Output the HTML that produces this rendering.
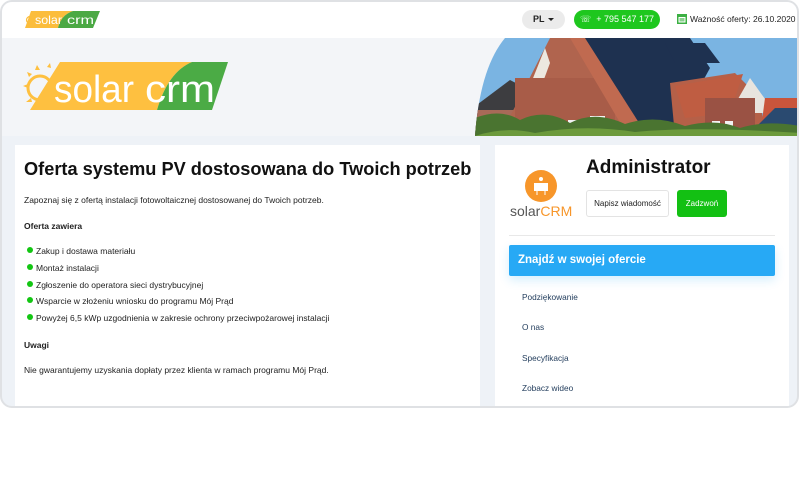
<!DOCTYPE html>
<html><head><meta charset="utf-8"><style>
*{margin:0;padding:0;box-sizing:border-box}
body{width:800px;height:500px;background:#fff;font-family:"Liberation Sans",sans-serif;position:relative;overflow:hidden}
.frame{position:absolute;left:0;top:0;width:799px;height:408px;border:2px solid #dfe1e4;border-radius:12px;overflow:hidden;background:#eef2f7}
.in{position:absolute;left:-2px;top:-2px;width:800px;height:410px}
.hdr{position:absolute;left:0;top:0;width:100%;height:38px;background:#fff}
.hero{position:absolute;left:0;top:38px;width:100%;height:98px;background:#f3f5f8}
.pl{position:absolute;left:522px;top:10px;width:43px;height:19px;background:#ebebeb;border-radius:10px;font-size:9px;font-weight:bold;color:#222;line-height:19px;padding-left:11px}
.pl:after{content:"";position:absolute;left:26px;top:8px;border:3px solid transparent;border-top:3px solid #222}
.tel{position:absolute;left:574px;top:10px;width:86px;height:19px;background:#1ec71e;border-radius:10px;color:#fff;font-size:9px;line-height:19px;text-align:center;white-space:nowrap}
.wz{position:absolute;top:14px;font-size:8.5px;color:#222;white-space:nowrap}
.card{position:absolute;background:#fff}
h1{font-size:18.2px;font-weight:bold;color:#111;position:absolute;left:9px;top:14px;white-space:nowrap}
.t{position:absolute;left:9px;font-size:8.5px;color:#222;white-space:nowrap}
.b{font-weight:bold}
.li:before{content:"";position:absolute;left:-9px;top:1px;width:6px;height:6px;border-radius:50%;background:#13c613}
.nav{position:absolute;left:27px;font-size:8.3px;color:#1f3a5a}
</style></head><body>
<div class="frame"><div class="in">
<div class="hdr">
<svg style="position:absolute;left:23px;top:9px" width="78" height="21" viewBox="0 0 78 21">
<path d="M8 2 H50 Q38 6 35 19 H2 Z" fill="#fbbd3c"/><path d="M50 2 H77 L70 19 H35 Q38 6 50 2Z" fill="#4ba944"/>
<text x="12" y="15" font-size="12" fill="#fff" font-family="Liberation Sans" textLength="27" lengthAdjust="spacingAndGlyphs">solar</text><text x="44" y="15" font-size="12" fill="#fff" font-family="Liberation Sans" textLength="27" lengthAdjust="spacingAndGlyphs">crm</text>
<circle cx="7" cy="11" r="3.5" fill="none" stroke="#fbbd3c" stroke-width="1.2"/></svg>
<div class="pl">PL</div>
<div class="tel">☏ &nbsp;+ 795 547 177</div>
<svg style="position:absolute;left:677px;top:13px" width="10" height="11"><rect x="0" y="1" width="10" height="10" fill="#3cb043"/><rect x="1.5" y="4" width="7" height="5.5" fill="#fff"/><rect x="2.5" y="5" width="5" height="3.5" fill="#3cb043" opacity=".6"/></svg>
<div class="wz" style="left:690px">Ważność oferty: 26.10.2020</div>
</div>
<div class="hero">
<svg style="position:absolute;left:20px;top:20px" width="210" height="56" viewBox="0 0 210 56">
<path d="M40 4 H172 Q148 14 137 52 H10 Z" fill="#fec040"/><path d="M172 4 H208 L192 52 H137 Q148 14 172 4Z" fill="#4bab45"/>
<circle cx="20" cy="30" r="12" fill="none" stroke="#fec040" stroke-width="3"/>
<g fill="#fec040"><path d="M3 28 l5 -2 v4z"/><path d="M7 14 l5 2 -3 3z"/><path d="M17 7 l3 5 h-5z"/><path d="M30 5 l1 5 -4 -1z"/><path d="M6 44 l5 -4 1 4z"/></g>
<text x="34" y="44" font-size="38" fill="#fff" font-family="Liberation Sans" textLength="80" lengthAdjust="spacingAndGlyphs">solar</text>
<text x="125" y="44" font-size="38" fill="#fff" font-family="Liberation Sans" textLength="70" lengthAdjust="spacingAndGlyphs">crm</text></svg>
<svg style="position:absolute;left:475px;top:0" width="325" height="98" viewBox="0 0 325 98">
<defs><clipPath id="c"><path d="M30 0 H325 V98 H0 Q5 30 30 0Z"/></clipPath></defs>
<g clip-path="url(#c)">
<rect width="325" height="98" fill="#7ab4e2"/>
<path d="M-5 72 L35 42 L60 55 L60 98 H-5Z" fill="#3d3d40"/>
<rect x="0" y="72" width="60" height="26" fill="#a86a58"/>
<path d="M25 98 L75 0 H118 L160 98Z" fill="#b0644e"/>
<path d="M70 10 L35 98 H48 L75 25Z" fill="#ece8e0"/>
<rect x="40" y="40" width="100" height="58" fill="#a85c48"/>
<path d="M105 0 H215 L235 30 L205 85 L170 110Z" fill="#1e3150"/>
<path d="M110 0 L180 110 H160 L95 0Z" fill="#c06a50"/>
<path d="M190 5 H230 L245 25 H200Z" fill="#1e3150"/>
<path d="M195 45 L260 35 L285 60 L290 98 H200Z" fill="#b56048"/>
<path d="M200 48 L268 36 L255 75 L210 80Z" fill="#bf5d42"/>
<path d="M275 40 L255 75 H300Z" fill="#e8e4de"/>
<rect x="230" y="60" width="50" height="38" fill="#9a5244"/>
<path d="M290 60 L325 60 V98 H285Z" fill="#c9553c"/>
<path d="M275 95 L300 70 H325 V98Z" fill="#2a4a70"/>
<rect x="115" y="78" width="15" height="15" fill="#f2f2f2"/><rect x="68" y="82" width="11" height="12" fill="#f2f2f2"/><rect x="93" y="82" width="9" height="12" fill="#f2f2f2"/><rect x="237" y="83" width="8" height="12" fill="#f2f2f2"/><rect x="250" y="83" width="8" height="12" fill="#f2f2f2"/>
<path d="M0 98 V80 Q25 70 45 82 Q70 70 95 85 Q120 72 150 86 Q180 76 210 88 Q240 80 265 90 Q290 82 325 88 V98Z" fill="#4a7430"/>
<path d="M0 98 Q30 88 60 95 Q110 86 160 94 Q220 88 325 95 V98Z" fill="#6c9a3c"/>
</g></svg>
</div>
<div class="card" style="left:15px;top:145px;width:465px;height:265px">
<h1>Oferta systemu PV dostosowana do Twoich potrzeb</h1>
<div class="t" style="top:50px">Zapoznaj się z ofertą instalacji fotowoltaicznej dostosowanej do Twoich potrzeb.</div>
<div class="t b" style="top:76px">Oferta zawiera</div>
<div class="t li" style="left:21px;top:101px">Zakup i dostawa materiału</div>
<div class="t li" style="left:21px;top:118px">Montaż instalacji</div>
<div class="t li" style="left:21px;top:135px">Zgłoszenie do operatora sieci dystrybucyjnej</div>
<div class="t li" style="left:21px;top:151px">Wsparcie w złożeniu wniosku do programu Mój Prąd</div>
<div class="t li" style="left:21px;top:168px">Powyżej 6,5 kWp uzgodnienia w zakresie ochrony przeciwpożarowej instalacji</div>
<div class="t b" style="top:195px">Uwagi</div>
<div class="t" style="top:220px">Nie gwarantujemy uzyskania dopłaty przez klienta w ramach programu Mój Prąd.</div>
</div>
<div class="card" style="left:495px;top:145px;width:294px;height:265px">
<svg style="position:absolute;left:30px;top:25px" width="32" height="32"><circle cx="16" cy="16" r="16" fill="#f7962a"/><rect x="9" y="13" width="14" height="8" fill="#fff"/><circle cx="16" cy="9" r="2" fill="#fff"/><path d="M12 21 v4 M20 21 v4" stroke="#fff"/></svg>
<div style="position:absolute;left:15px;top:58px;font-size:14px;color:#555">solar<span style="color:#f7962a">CRM</span></div>
<div style="position:absolute;left:91px;top:12px;font-size:19px;font-weight:bold;color:#111">Administrator</div>
<div style="position:absolute;left:91px;top:45px;width:83px;height:27px;border:1px solid #e3e3e3;border-radius:3px;font-size:8px;line-height:25px;text-align:center;color:#222">Napisz wiadomość</div>
<div style="position:absolute;left:182px;top:45px;width:50px;height:27px;background:#13c013;border-radius:3px;font-size:8px;line-height:27px;text-align:center;color:#fff">Zadzwoń</div>
<div style="position:absolute;left:14px;top:90px;width:266px;height:1px;background:#e8e8e8"></div>
<div style="position:absolute;left:14px;top:100px;width:266px;height:31px;background:#27a9f5;border-radius:2px;box-shadow:0 4px 10px rgba(39,169,245,.2);color:#fff;font-weight:bold;font-size:11.5px;line-height:31px;padding-left:9px">Znajdź w swojej ofercie</div>
<div class="nav" style="top:147px">Podziękowanie</div>
<div class="nav" style="top:177px">O nas</div>
<div class="nav" style="top:208px">Specyfikacja</div>
<div class="nav" style="top:238px">Zobacz wideo</div>
</div>
</div></div>
</body></html>
